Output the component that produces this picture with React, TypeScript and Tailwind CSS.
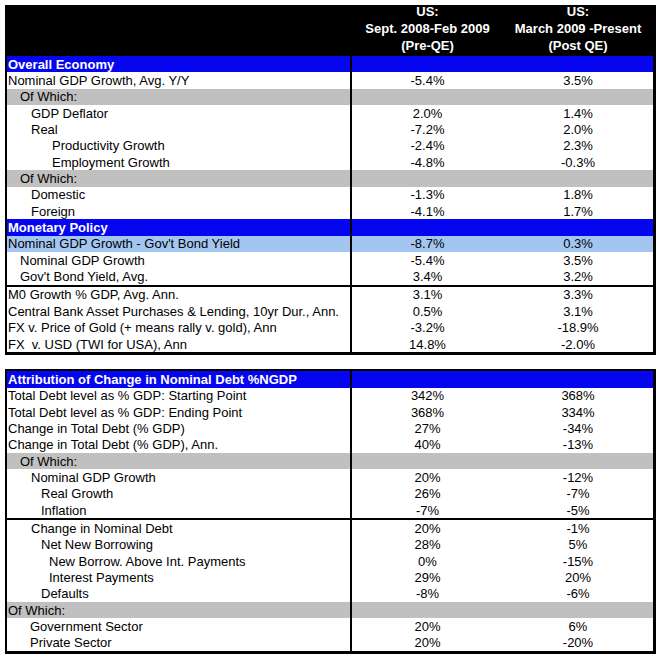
import React from "react";

type Kind = "normal" | "section" | "gray" | "light";
type Row = { label: string; ind: number; v1?: string; v2?: string; kind?: Kind; line?: boolean };

const t1: Row[] = [
  { label: "Overall Economy", ind: 1, kind: "section" },
  { label: "Nominal GDP Growth, Avg. Y/Y", ind: 1, v1: "-5.4%", v2: "3.5%" },
  { label: "Of Which:", ind: 13, kind: "gray" },
  { label: "GDP Deflator", ind: 24, v1: "2.0%", v2: "1.4%" },
  { label: "Real", ind: 24, v1: "-7.2%", v2: "2.0%" },
  { label: "Productivity Growth", ind: 45, v1: "-2.4%", v2: "2.3%" },
  { label: "Employment Growth", ind: 45, v1: "-4.8%", v2: "-0.3%" },
  { label: "Of Which:", ind: 13, kind: "gray" },
  { label: "Domestic", ind: 24, v1: "-1.3%", v2: "1.8%" },
  { label: "Foreign", ind: 24, v1: "-4.1%", v2: "1.7%" },
  { label: "Monetary Policy", ind: 1, kind: "section" },
  { label: "Nominal GDP Growth - Gov't Bond Yield", ind: 1, v1: "-8.7%", v2: "0.3%", kind: "light" },
  { label: "Nominal GDP Growth", ind: 13, v1: "-5.4%", v2: "3.5%" },
  { label: "Gov't Bond Yield, Avg.", ind: 13, v1: "3.4%", v2: "3.2%" },
  { label: "M0 Growth % GDP, Avg. Ann.", ind: 1, v1: "3.1%", v2: "3.3%", line: true },
  { label: "Central Bank Asset Purchases & Lending, 10yr Dur., Ann.", ind: 1, v1: "0.5%", v2: "3.1%" },
  { label: "FX v. Price of Gold (+ means rally v. gold), Ann", ind: 1, v1: "-3.2%", v2: "-18.9%" },
  { label: "FX  v. USD (TWI for USA), Ann", ind: 1, v1: "14.8%", v2: "-2.0%" },
];

const t2: Row[] = [
  { label: "Attribution of Change in Nominal Debt %NGDP", ind: 1, kind: "section" },
  { label: "Total Debt level as % GDP: Starting Point", ind: 1, v1: "342%", v2: "368%" },
  { label: "Total Debt level as % GDP: Ending Point", ind: 1, v1: "368%", v2: "334%" },
  { label: "Change in Total Debt (% GDP)", ind: 1, v1: "27%", v2: "-34%" },
  { label: "Change in Total Debt (% GDP), Ann.", ind: 1, v1: "40%", v2: "-13%" },
  { label: "Of Which:", ind: 13, kind: "gray" },
  { label: "Nominal GDP Growth", ind: 24, v1: "20%", v2: "-12%" },
  { label: "Real Growth", ind: 34, v1: "26%", v2: "-7%" },
  { label: "Inflation", ind: 34, v1: "-7%", v2: "-5%" },
  { label: "Change in Nominal Debt", ind: 24, v1: "20%", v2: "-1%", line: true },
  { label: "Net New Borrowing", ind: 34, v1: "28%", v2: "5%" },
  { label: "New Borrow. Above Int. Payments", ind: 42, v1: "0%", v2: "-15%" },
  { label: "Interest Payments", ind: 42, v1: "29%", v2: "20%" },
  { label: "Defaults", ind: 34, v1: "-8%", v2: "-6%" },
  { label: "Of Which:", ind: 1, kind: "gray" },
  { label: "Government Sector", ind: 23, v1: "20%", v2: "6%" },
  { label: "Private Sector", ind: 23, v1: "20%", v2: "-20%" },
];

function bgFor(kind?: Kind) {
  if (kind === "section") return "bg-[#0505f0]";
  if (kind === "gray") return "bg-[#c0c0c0]";
  if (kind === "light") return "bg-[#a3c6f0]";
  return "bg-white";
}

function TRow({ r }: { r: Row }) {
  const bg = bgFor(r.kind);
  const isSec = r.kind === "section";
  return (
    <div className={`flex h-[16.35px] box-content ${bg} ${r.line ? "border-t-2 border-black" : ""}`}>
      <div
        className={`w-[343px] flex items-center whitespace-pre ${isSec ? "font-bold text-white" : "text-black"}`}
        style={{ paddingLeft: r.ind }}
      >
        {r.label}
      </div>
      <div className="w-[153px] border-l-2 border-black flex items-center justify-center">{r.v1 ?? ""}</div>
      <div className="w-[150px] flex items-center justify-center">{r.v2 ?? ""}</div>
    </div>
  );
}

export default function App() {
  return (
    <div
      className="bg-white w-[658px] h-[657px] pl-[5px] pt-[5px] text-[13px] leading-none text-black"
      style={{ fontFamily: '"Liberation Sans", Arial, sans-serif' }}
    >
      <div className="w-[651px] border-l-2 border-r-[3px] border-b-[3px] border-black">
        <div className="flex h-[51px] bg-black text-white font-bold leading-[17px]">
          <div className="w-[343px]" />
          <div className="w-[153px] pl-[2px] flex flex-col items-center -mt-[2px] pt-0">
            <span>US:</span>
            <span>Sept. 2008-Feb 2009</span>
            <span>(Pre-QE)</span>
          </div>
          <div className="w-[150px] flex flex-col items-center -mt-[2px]">
            <span>US:</span>
            <span>March 2009 -Present</span>
            <span>(Post QE)</span>
          </div>
        </div>
        {t1.map((r, i) => (
          <TRow key={i} r={r} />
        ))}
      </div>
      <div className="mt-[14px] w-[651px] border-t-2 border-l-2 border-r-[3px] border-b-[3px] border-black">
        {t2.map((r, i) => (
          <TRow key={i} r={r} />
        ))}
      </div>
    </div>
  );
}
